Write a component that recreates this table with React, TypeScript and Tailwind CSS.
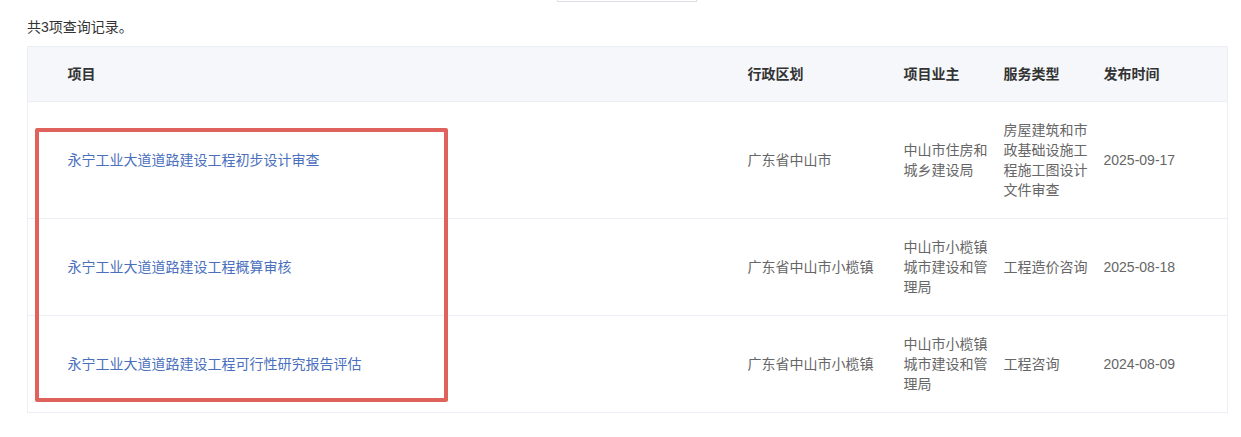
const rows = [
  {
    title: "永宁工业大道道路建设工程初步设计审查",
    region: "广东省中山市",
    owner: "中山市住房和城乡建设局",
    service: "房屋建筑和市政基础设施工程施工图设计文件审查",
    date: "2025-09-17",
  },
  {
    title: "永宁工业大道道路建设工程概算审核",
    region: "广东省中山市小榄镇",
    owner: "中山市小榄镇城市建设和管理局",
    service: "工程造价咨询",
    date: "2025-08-18",
  },
  {
    title: "永宁工业大道道路建设工程可行性研究报告评估",
    region: "广东省中山市小榄镇",
    owner: "中山市小榄镇城市建设和管理局",
    service: "工程咨询",
    date: "2024-08-09",
  },
];

export default function App() {
  return (
    <div
      className="relative w-[1241px] h-[437px] bg-white overflow-hidden text-[14px] leading-[20px] text-[#333]"
      style={{ fontFamily: '"Liberation Sans", "Noto Sans CJK SC", sans-serif' }}
    >
      {/* cut-off box from the section above */}
      <div className="ml-[557px] w-[140px] h-[2px] border border-t-0 border-[#dcdfe6]" />

      <div className="pl-[27px] pt-[15px] pb-[9px]">共3项查询记录。</div>

      <div className="ml-[27px] w-[1200px]">
        <table className="w-full table-fixed border-collapse border border-[#ebeef5]">
          <colgroup>
            <col className="w-[32px]" />
            <col className="w-[680px]" />
            <col className="w-[156px]" />
            <col className="w-[100px]" />
            <col className="w-[100px]" />
            <col className="w-[132px]" />
          </colgroup>
          <thead>
            <tr className="bg-[#f5f7fa] h-[55px] border-b border-[#ebeef5]">
              <th />
              <th className="px-2 text-left font-bold text-[#333]">项目</th>
              <th className="px-2 text-left font-bold text-[#333]">行政区划</th>
              <th className="px-2 text-left font-bold text-[#333]">项目业主</th>
              <th className="px-2 text-left font-bold text-[#333]">服务类型</th>
              <th className="px-2 text-left font-bold text-[#333]">发布时间</th>
            </tr>
          </thead>
          <tbody>
            {rows.map((r) => (
              <tr key={r.title} className="border-b border-[#ebeef5] text-[#666]">
                <td />
                <td className="px-2 py-[18px] align-middle">
                  <a className="text-[#4a70bd] cursor-pointer">{r.title}</a>
                </td>
                <td className="px-2 py-[18px] align-middle">{r.region}</td>
                <td className="px-2 py-[18px] align-middle">{r.owner}</td>
                <td className="px-2 py-[18px] align-middle">{r.service}</td>
                <td className="px-2 py-[18px] align-middle">{r.date}</td>
              </tr>
            ))}
          </tbody>
        </table>
      </div>

      {/* annotation highlight */}
      <div className="absolute left-[35px] top-[128px] w-[413px] h-[274px] border-4 border-[#df625c] rounded-[2px]" />
    </div>
  );
}
